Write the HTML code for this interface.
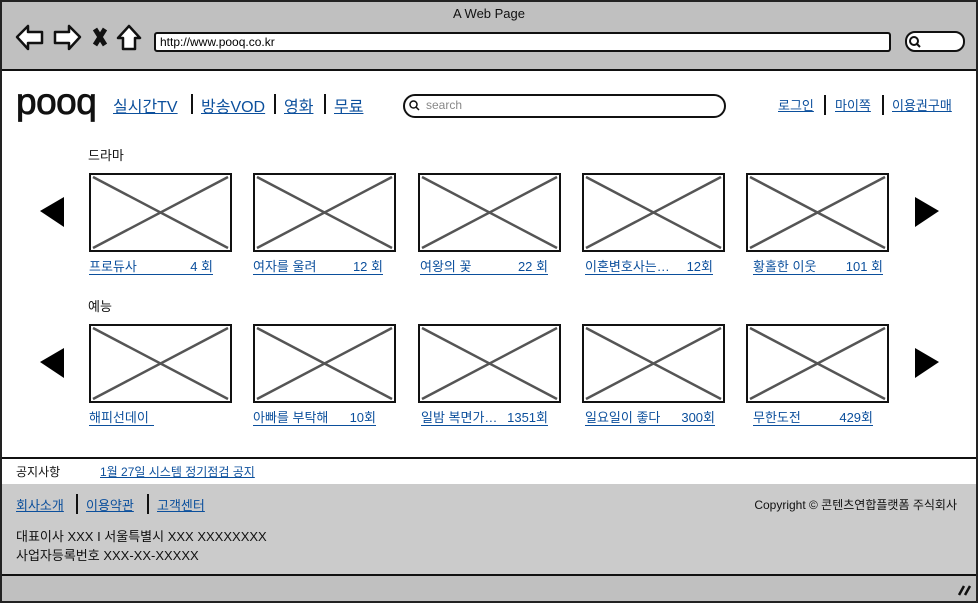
<!DOCTYPE html>
<html><head><meta charset="utf-8"><style>
*{margin:0;padding:0;box-sizing:border-box}
body{width:978px;height:603px;position:relative;overflow:hidden;background:#fff;font-family:"Liberation Sans","Noto Sans CJK KR",sans-serif;}
.a{position:absolute}
a,.lk{color:#0b4f9c;text-decoration:underline}
.thumb{position:absolute;width:143px;height:79px;border:2px solid #111;background:#fff}
.thumb svg{position:absolute;left:0;top:0}
.cap{position:absolute;display:flex;justify-content:space-between;font-size:13px;color:#0b4f9c;border-bottom:1px solid #0b4f9c;line-height:15px;white-space:pre}
.sep{position:absolute;width:2px;background:#111}
</style></head><body>
<div class="a" style="left:0;top:0;width:978px;height:603px;border:2px solid #222"></div>
<div class="a" style="left:2px;top:2px;width:974px;height:69px;background:#c0c0c0;border-bottom:2px solid #111"></div>
<div class="a" style="left:0;top:6px;width:978px;text-align:center;font-size:13px;color:#111">A Web Page</div>
<svg class="a" style="left:14px;top:22px" width="130" height="32" viewBox="0 0 130 32">
<path d="M3 15 L14 4 L14 10 L28 10 L28 21 L14 21 L14 27 Z" fill="#fff" stroke="#111" stroke-width="2.5" stroke-linejoin="round"/>
<path d="M66 15 L55 4 L55 10 L41 10 L41 21 L55 21 L55 27 Z" fill="#fff" stroke="#111" stroke-width="2.5" stroke-linejoin="round"/>
<path d="M81 7 L91 23 M91 7 L81 23" stroke="#111" stroke-width="5"/>
<path d="M104 16 L115 4 L126 16 L121 16 L121 27 L109 27 L109 16 Z" fill="#fff" stroke="#111" stroke-width="2.5" stroke-linejoin="round"/>
</svg>
<div class="a" style="left:154px;top:32px;width:737px;height:20px;background:#fff;border:2px solid #111;border-radius:3px;font-size:12px;padding-left:4px;line-height:16px">http://www.pooq.co.kr</div>
<div class="a" style="left:905px;top:31px;width:60px;height:21px;background:#fff;border:2px solid #111;border-radius:10px"></div>
<svg class="a" style="left:908px;top:35px" width="14" height="14"><circle cx="6" cy="6" r="4" fill="none" stroke="#111" stroke-width="2"/><path d="M9 9 L12 12" stroke="#111" stroke-width="2"/></svg>

<div class="a" style="left:16px;top:82px;font-size:37px;line-height:40px;color:#111;letter-spacing:-0.5px;-webkit-text-stroke:0.8px #111">pooq</div>
<div class="a" style="left:113px;top:93px;font-size:16px"><a>실시간TV</a></div>
<div class="sep" style="left:191px;top:94px;height:20px"></div>
<div class="a" style="left:201px;top:93px;font-size:16px"><a>방송VOD</a></div>
<div class="sep" style="left:274px;top:94px;height:20px"></div>
<div class="a" style="left:284px;top:93px;font-size:16px"><a>영화</a></div>
<div class="sep" style="left:324px;top:94px;height:20px"></div>
<div class="a" style="left:334px;top:93px;font-size:16px"><a>무료</a></div>
<div class="a" style="left:403px;top:94px;width:323px;height:24px;border:2px solid #111;border-radius:12px;background:#fff;font-size:12px;color:#888;padding-left:21px;line-height:19px">search</div>
<svg class="a" style="left:408px;top:99px" width="14" height="14"><circle cx="5.5" cy="5.5" r="3.5" fill="none" stroke="#111" stroke-width="1.5"/><path d="M8 8 L11 11" stroke="#111" stroke-width="1.5"/></svg>
<div class="a" style="left:778px;top:95px;font-size:13px"><a>로그인</a></div>
<div class="sep" style="left:824px;top:95px;height:20px"></div>
<div class="a" style="left:835px;top:95px;font-size:13px"><a>마이쪽</a></div>
<div class="sep" style="left:882px;top:95px;height:20px"></div>
<div class="a" style="left:892px;top:95px;font-size:13px"><a>이용권구매</a></div>

<div class="a" style="left:88px;top:145px;font-size:13px;color:#111">드라마</div>
<div class="a" style="left:88px;top:296px;font-size:13px;color:#111">예능</div>

<svg class="a" style="left:38px;top:195px" width="30" height="34"><path d="M2 16 L26 2 L26 32 Z" fill="#000"/></svg>
<svg class="a" style="left:912px;top:195px" width="30" height="34"><path d="M27 16 L3 2 L3 32 Z" fill="#000"/></svg>
<svg class="a" style="left:38px;top:346px" width="30" height="34"><path d="M2 16 L26 2 L26 32 Z" fill="#000"/></svg>
<svg class="a" style="left:912px;top:346px" width="30" height="34"><path d="M27 16 L3 2 L3 32 Z" fill="#000"/></svg>

<div class="thumb" style="left:89px;top:173px"><svg width="139" height="75"><path d="M2 2 L137 73 M137 2 L2 73" stroke="#555" stroke-width="2.5"/></svg></div>
<div class="thumb" style="left:253px;top:173px"><svg width="139" height="75"><path d="M2 2 L137 73 M137 2 L2 73" stroke="#555" stroke-width="2.5"/></svg></div>
<div class="thumb" style="left:418px;top:173px"><svg width="139" height="75"><path d="M2 2 L137 73 M137 2 L2 73" stroke="#555" stroke-width="2.5"/></svg></div>
<div class="thumb" style="left:582px;top:173px"><svg width="139" height="75"><path d="M2 2 L137 73 M137 2 L2 73" stroke="#555" stroke-width="2.5"/></svg></div>
<div class="thumb" style="left:746px;top:173px"><svg width="139" height="75"><path d="M2 2 L137 73 M137 2 L2 73" stroke="#555" stroke-width="2.5"/></svg></div>

<div class="thumb" style="left:89px;top:324px"><svg width="139" height="75"><path d="M2 2 L137 73 M137 2 L2 73" stroke="#555" stroke-width="2.5"/></svg></div>
<div class="thumb" style="left:253px;top:324px"><svg width="139" height="75"><path d="M2 2 L137 73 M137 2 L2 73" stroke="#555" stroke-width="2.5"/></svg></div>
<div class="thumb" style="left:418px;top:324px"><svg width="139" height="75"><path d="M2 2 L137 73 M137 2 L2 73" stroke="#555" stroke-width="2.5"/></svg></div>
<div class="thumb" style="left:582px;top:324px"><svg width="139" height="75"><path d="M2 2 L137 73 M137 2 L2 73" stroke="#555" stroke-width="2.5"/></svg></div>
<div class="thumb" style="left:746px;top:324px"><svg width="139" height="75"><path d="M2 2 L137 73 M137 2 L2 73" stroke="#555" stroke-width="2.5"/></svg></div>

<div class="cap" style="left:89px;top:259px;width:124px"><span>프로듀사</span><span>4 회</span></div>
<div class="cap" style="left:253px;top:259px;width:130px"><span>여자를 울려</span><span>12 회</span></div>
<div class="cap" style="left:420px;top:259px;width:128px"><span>여왕의 꽃</span><span>22 회</span></div>
<div class="cap" style="left:585px;top:259px;width:128px"><span>이혼변호사는…</span><span>12회</span></div>
<div class="cap" style="left:753px;top:259px;width:130px"><span>황홀한 이웃</span><span>101 회</span></div>

<div class="cap" style="left:89px;top:410px;width:65px"><span>해피선데이</span></div>
<div class="cap" style="left:253px;top:410px;width:123px"><span>아빠를 부탁해</span><span>10회</span></div>
<div class="cap" style="left:421px;top:410px;width:127px"><span>일밤 복면가…</span><span>1351회</span></div>
<div class="cap" style="left:585px;top:410px;width:130px"><span>일요일이 좋다</span><span>300회</span></div>
<div class="cap" style="left:753px;top:410px;width:120px"><span>무한도전</span><span>429회</span></div>

<div class="a" style="left:2px;top:457px;width:974px;height:2px;background:#111"></div>
<div class="a" style="left:16px;top:463px;font-size:12px;color:#111">공지사항</div>
<div class="a" style="left:100px;top:463px;font-size:12px"><a>1월 27일 시스템 정기점검 공지</a></div>

<div class="a" style="left:2px;top:484px;width:974px;height:90px;background:#cbcbcb"></div>
<div class="a" style="left:16px;top:495px;font-size:13px"><a>회사소개</a></div>
<div class="sep" style="left:76px;top:494px;height:20px"></div>
<div class="a" style="left:86px;top:495px;font-size:13px"><a>이용약관</a></div>
<div class="sep" style="left:147px;top:494px;height:20px"></div>
<div class="a" style="left:157px;top:495px;font-size:13px"><a>고객센터</a></div>
<div class="a" style="left:700px;top:496px;width:257px;text-align:right;font-size:12px;color:#111">Copyright © 콘텐츠연합플랫폼 주식회사</div>
<div class="a" style="left:16px;top:526px;font-size:13px;color:#111">대표이사 XXX I 서울특별시 XXX XXXXXXXX</div>
<div class="a" style="left:16px;top:545px;font-size:13px;color:#111">사업자등록번호 XXX-XX-XXXXX</div>
<div class="a" style="left:2px;top:574px;width:974px;height:27px;background:#c0c0c0;border-top:2px solid #111"></div>
<svg class="a" style="left:956px;top:583px" width="16" height="14"><path d="M3 12 L8 3 M9 12 L14 3" stroke="#111" stroke-width="2.5"/></svg>
</body></html>
